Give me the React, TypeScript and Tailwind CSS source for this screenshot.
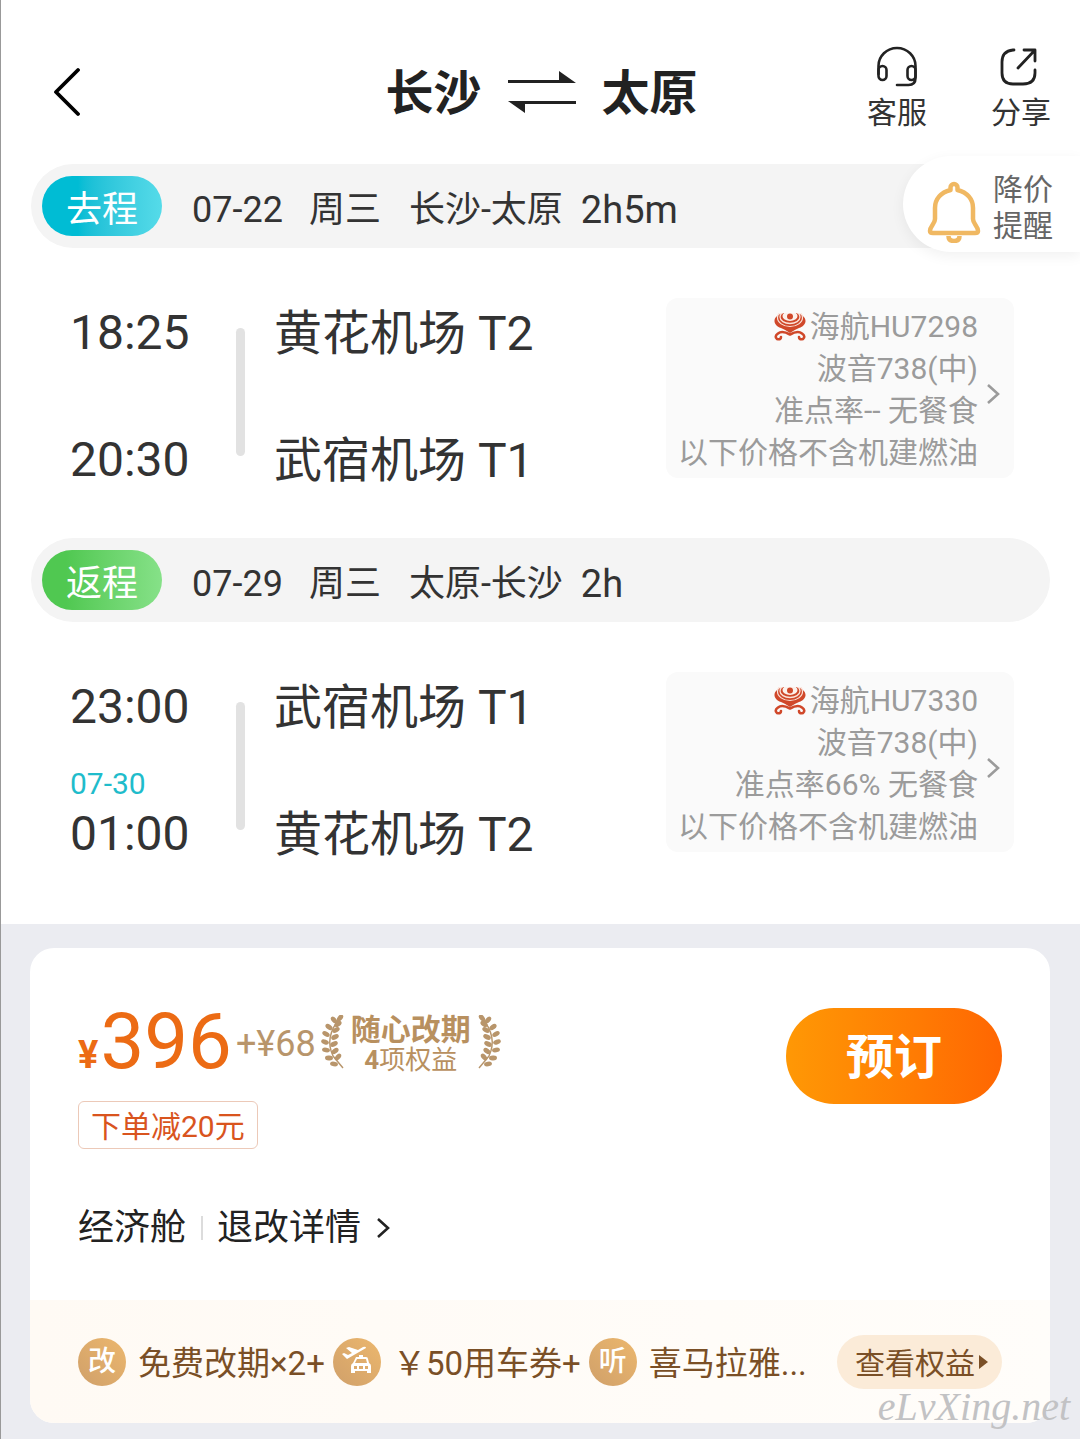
import React from "react";

interface Flight {
  label: string;
  tone: "out" | "back";
  date: string;
  weekday: string;
  route: string;
  duration: string;
  departTime: string;
  departAirport: string;
  arriveTime: string;
  arriveAirport: string;
  arriveDate?: string;
  flightNo: string;
  punctuality: string;
}

const FLIGHTS: Flight[] = [
  {
    label: "去程",
    tone: "out",
    date: "07-22",
    weekday: "周三",
    route: "长沙-太原",
    duration: "2h5m",
    departTime: "18:25",
    departAirport: "黄花机场 T2",
    arriveTime: "20:30",
    arriveAirport: "武宿机场 T1",
    flightNo: "海航HU7298",
    punctuality: "准点率-- 无餐食",
  },
  {
    label: "返程",
    tone: "back",
    date: "07-29",
    weekday: "周三",
    route: "太原-长沙",
    duration: "2h",
    departTime: "23:00",
    departAirport: "武宿机场 T1",
    arriveTime: "01:00",
    arriveAirport: "黄花机场 T2",
    arriveDate: "07-30",
    flightNo: "海航HU7330",
    punctuality: "准点率66% 无餐食",
  },
];

// x, y and angle of each leaf on the left laurel branch
const LEAVES = [
  [19, 3, -50],
  [13, 5, 50],
  [17, 9, -35],
  [8, 12, 35],
  [15, 15, -30],
  [5, 19, 30],
  [14, 22, -25],
  [4, 27, 20],
  [13, 29, -25],
  [5, 35, 10],
  [14, 36, -35],
  [8, 43, 5],
  [17, 42, -50],
  [13, 49, 10],
];

const HeadsetIcon = () => (
  <svg width="42" height="42" viewBox="0 0 42 42" fill="none" stroke="#222" strokeWidth="2.6">
    <path d="M2.5 28V20a18.5 18 0 0 1 37 0v12q0 7-7 7H21" strokeLinecap="round" />
    <rect x="2.5" y="20" width="8" height="14" rx="4" />
    <rect x="31.5" y="20" width="8" height="14" rx="4" />
  </svg>
);

const ShareIcon = () => (
  <svg
    width="42"
    height="42"
    viewBox="0 0 42 42"
    fill="none"
    stroke="#222"
    strokeWidth="2.8"
    strokeLinecap="round"
    strokeLinejoin="round"
  >
    <path d="M14 4h-1Q2 5 2 16v11q0 11 11 11h10q12 0 12-11v-3" />
    <path d="M24 4h11v11M35 4L18 22" />
  </svg>
);

const SwapIcon = () => (
  <svg width="68" height="42" viewBox="0 0 68 42" fill="#222">
    <path d="M0 9h51V0l17 12H0z" />
    <path d="M68 33H17V42L0 30h68z" />
  </svg>
);

const BellIcon = () => (
  <svg
    width="54"
    height="62"
    viewBox="0 0 54 62"
    fill="none"
    stroke="#f0b862"
    strokeWidth="4.5"
    strokeLinejoin="round"
  >
    <path d="M23.5 9V6.5a3.5 3.5 0 0 1 7 0V9C40 11.5 46 18 46 27V38c0 5 5 7 5 12q0 2-3 2H6q-3 0-3-2c0-5 5-7 5-12V27C8 18 14 11.5 23.5 9z" />
    <path d="M21.5 55q0 5 5.5 5t5.5-5" />
  </svg>
);

const AirlineLogo = () => (
  <svg width="32" height="28" viewBox="0 0 32 28" fill="none">
    <path d="M9 0C-2 3-2 12 7 15q5 2 9 5 4-3 9-5C34 12 34 3 23 0z" fill="#d0482a" />
    <ellipse cx="16" cy="4.5" rx="12.5" ry="9" stroke="#fbe3da" strokeWidth="1.2" />
    <ellipse cx="16" cy="4" rx="10" ry="6.5" stroke="#fbe3da" strokeWidth="1.3" />
    <ellipse cx="16" cy="3" rx="7.5" ry="5" fill="#fbf1ec" />
    <circle cx="16" cy="3.5" r="3" fill="#d0482a" />
    <path
      d="M16 21.500Q8 17 4 20.500q-4 3-1 5.500 4 1 4-2M16 21.500q8-4.500 12-1 4 3 1 5.500-4 1-4-2"
      stroke="#d0482a"
      strokeWidth="2.6"
      strokeLinecap="round"
    />
  </svg>
);

const Laurel = ({ className }: { className?: string }) => (
  <svg width="24" height="54" viewBox="0 0 24 54" fill="#b8956b" className={className}>
    <path d="M19 3Q3 22 12 41L22 53" fill="none" stroke="#b8956b" strokeWidth="1.4" />
    {LEAVES.map(([x, y, angle]) => (
      <ellipse
        key={`${x}-${y}`}
        rx="4"
        ry="2.4"
        transform={`translate(${x} ${y}) rotate(${angle})`}
      />
    ))}
  </svg>
);

const TaxiIcon = () => (
  <svg width="32" height="32" viewBox="0 0 32 32" fill="#fff">
    <path d="M1 8l2-1 4 2 4-2-6-5 3-1 9 3 5-3q3-1 3 1L6 13z" />
    <path
      fillRule="evenodd"
      d="M15 11h3V9h4v2h3q2 0 2 2l1 4q2 1 2 3v7h-4v-2H14v2h-4v-7q0-2 2-3zM16 13l-2 4h12l-1-4zM13 20v3h3v-3zm5 0v3h4v-3zm6 0v3h3v-3z"
    />
  </svg>
);

const Chevron = ({ color }: { color: string }) => (
  <svg width="14" height="22" viewBox="0 0 14 22" fill="none" stroke={color} strokeWidth="2.6">
    <path d="M2 2l10 9-10 9" />
  </svg>
);

const Header: React.FC = () => (
  <header className="relative flex h-[164px] items-center justify-center">
    <button aria-label="返回" className="absolute left-[51px] top-[66px]">
      <svg width="28" height="52" viewBox="0 0 28 52" fill="none" stroke="#000" strokeWidth="3.8">
        <path d="M26 4L4 26l22 22" strokeLinecap="round" strokeLinejoin="round" />
      </svg>
    </button>
    <h1 className="flex items-center gap-[26px] pl-[2px] pt-5 text-[48px] font-bold leading-[64px] text-[#222]">
      <span className="pt-1">长沙</span>
      <SwapIcon />
      <span className="pt-1">太原</span>
    </h1>
    <nav className="absolute right-[29px] top-[46px] flex gap-16">
      <button className="flex flex-col items-center gap-1 text-[30px] leading-[42px] text-[#333]">
        <HeadsetIcon />
        客服
      </button>
      <button className="flex flex-col items-center gap-1 text-[30px] leading-[42px] text-[#333]">
        <ShareIcon />
        分享
      </button>
    </nav>
  </header>
);

const FlightBar = ({ flight }: { flight: Flight }) => (
  <div className="mx-[30px] flex h-[84px] items-center rounded-full bg-[#f4f4f4] pl-[11px] text-[36px] text-[#333]">
    <span
      className={
        flight.tone === "out"
          ? "flex h-[60px] w-[120px] items-center justify-center rounded-full bg-linear-to-r from-[#00bcd4] from-30% to-[#55dbe9] pt-2 text-white"
          : "flex h-[60px] w-[120px] items-center justify-center rounded-full bg-linear-to-r from-[#50c851] from-20% to-[#86e188] pt-2 text-white"
      }
    >
      {flight.label}
    </span>
    <div className="flex items-center pl-[30px] pt-2">
      <span>{flight.date}</span>
      <span className="ml-[26px]">{flight.weekday}</span>
      <span className="ml-[28px]">{flight.route}</span>
      <span className="ml-[18px] text-[38px]">{flight.duration}</span>
    </div>
  </div>
);

const FlightLeg = ({ flight }: { flight: Flight }) => (
  <div className="flex items-start pb-[49px] pl-[69px] pr-[66px] pt-[50px] text-[48px] leading-[56px] text-[#333]">
    <div className="w-[166px] pt-[7px]">
      <div>{flight.departTime}</div>
      <div className="flex h-[71px] items-end pb-1 text-[30px] leading-[36px] text-[#1fbccb]">
        {flight.arriveDate}
      </div>
      <div>{flight.arriveTime}</div>
    </div>
    <div className="mt-[30px] h-[128px] w-[9px] rounded-full bg-[#e2e2e2]" />
    <div className="ml-[29px] flex flex-col gap-[71px] pt-2">
      <div>{flight.departAirport}</div>
      <div>{flight.arriveAirport}</div>
    </div>
    <button className="ml-auto flex items-center gap-2 rounded-xl bg-[#fafafa] pb-1 pl-3 pr-[14px] pt-2 text-right text-[30px] leading-[42px] text-[#9b9b9b]">
      <span>
        <span className="flex items-center justify-end gap-1">
          <AirlineLogo />
          {flight.flightNo}
        </span>
        <span className="block">波音738(中)</span>
        <span className="block">{flight.punctuality}</span>
        <span className="block">以下价格不含机建燃油</span>
      </span>
      <span className="pt-2">
        <Chevron color="#9b9b9b" />
      </span>
    </button>
  </div>
);

const BenefitBadge = ({ children }: { children: React.ReactNode }) => (
  <span className="flex size-12 shrink-0 items-center justify-center rounded-full bg-linear-to-bl from-[#ecb76d] to-[#d0a06a] text-[28px] font-medium text-white">
    {children}
  </span>
);

const FareCard: React.FC = () => (
  <section className="overflow-hidden rounded-3xl bg-white">
    <div className="flex items-start justify-between px-12 pt-[60px]">
      <div>
        <div className="flex h-[68px] items-center">
          <div className="flex items-baseline pt-2 text-[#ec6b14]">
            <span className="text-[38px] font-bold">¥</span>
            <span className="ml-[2px] text-[78px] leading-[68px]">396</span>
          </div>
          <span className="ml-1 pt-1 text-[36px] text-[#b8956b]">+¥68</span>
          <div className="ml-[5px] flex items-center gap-[6px] text-[#b8905f]">
            <Laurel />
            <div className="pt-1 text-center">
              <div className="text-[30px] font-bold leading-[32px]">随心改期</div>
              <div className="text-[26px] leading-[28px]">
                <b>4</b>项权益
              </div>
            </div>
            <Laurel className="-scale-x-100" />
          </div>
        </div>
        <div className="mt-[25px] inline-flex h-12 items-center rounded-md border border-[#ecc9b8] px-[12px] pt-[3px] text-[30px] text-[#d9541e]">
          下单减20元
        </div>
      </div>
      <button className="h-24 w-[216px] rounded-full bg-linear-to-r from-[#ff9805] to-[#ff6602] pt-1 text-[48px] font-bold text-white">
        预订
      </button>
    </div>

    <div className="flex items-center px-12 pb-[47px] pt-[54px] text-[36px] leading-[50px] text-[#222]">
      经济舱
      <span className="ml-[15px] mr-[14px] h-6 w-[2px] bg-[#dcdcdc]" />
      <button className="flex items-center gap-[15px]">
        退改详情
        <Chevron color="#222" />
      </button>
    </div>

    {/* benefits included with the fare */}
    <div className="flex h-[123px] items-center bg-linear-to-r from-[#fffaf4] to-[#fffdfa] px-12 text-[33px] text-[#7a4f26]">
      <BenefitBadge>改</BenefitBadge>
      <span className="ml-3 mr-2 whitespace-nowrap pt-1">免费改期×2+</span>
      <BenefitBadge>
        <TaxiIcon />
      </BenefitBadge>
      <span className="ml-3 mr-2 whitespace-nowrap pt-1">￥50用车券+</span>
      <BenefitBadge>听</BenefitBadge>
      <span className="ml-3 whitespace-nowrap pt-1">喜马拉雅...</span>
      <button className="ml-auto flex h-[54px] items-center gap-1 whitespace-nowrap rounded-full bg-[#fbebd8] pl-[18px] pr-[14px] text-[30px]">
        <span className="pt-1">查看权益</span>
        <svg width="9" height="14" viewBox="0 0 9 14" fill="#7a4f26">
          <path d="M0 0l9 7-9 7z" />
        </svg>
      </button>
    </div>
  </section>
);

const App: React.FC = () => {
  return (
    <div className="relative min-h-screen overflow-hidden border-l border-[#999] bg-white font-[Roboto,'Noto_Sans_CJK_SC',sans-serif]">
      <Header />
      <main>
        <div className="pb-3">
          {FLIGHTS.map((flight) => (
            <React.Fragment key={flight.label}>
              <FlightBar flight={flight} />
              <FlightLeg flight={flight} />
            </React.Fragment>
          ))}
        </div>
        <div className="bg-[#ebecf1] pb-4 pl-[29px] pr-[30px] pt-6">
          <FareCard />
        </div>
      </main>

      {/* price drop reminder, stuck to the right edge */}
      <button className="absolute right-0 top-[156px] flex h-24 items-center gap-3 rounded-l-full bg-white pl-6 pr-[27px] pt-4 text-[30px] leading-[36px] text-[#666] shadow-[0_4px_14px_rgba(0,0,0,0.06)]">
        <BellIcon />
        <span className="pb-2">
          降价
          <br />
          提醒
        </span>
      </button>

      <span className="absolute bottom-[8px] right-[10px] font-['Liberation_Serif',serif] text-[40px] italic leading-[48px] text-[#c2c2c4]">
        eLvXing.net
      </span>
    </div>
  );
};

export default App;
